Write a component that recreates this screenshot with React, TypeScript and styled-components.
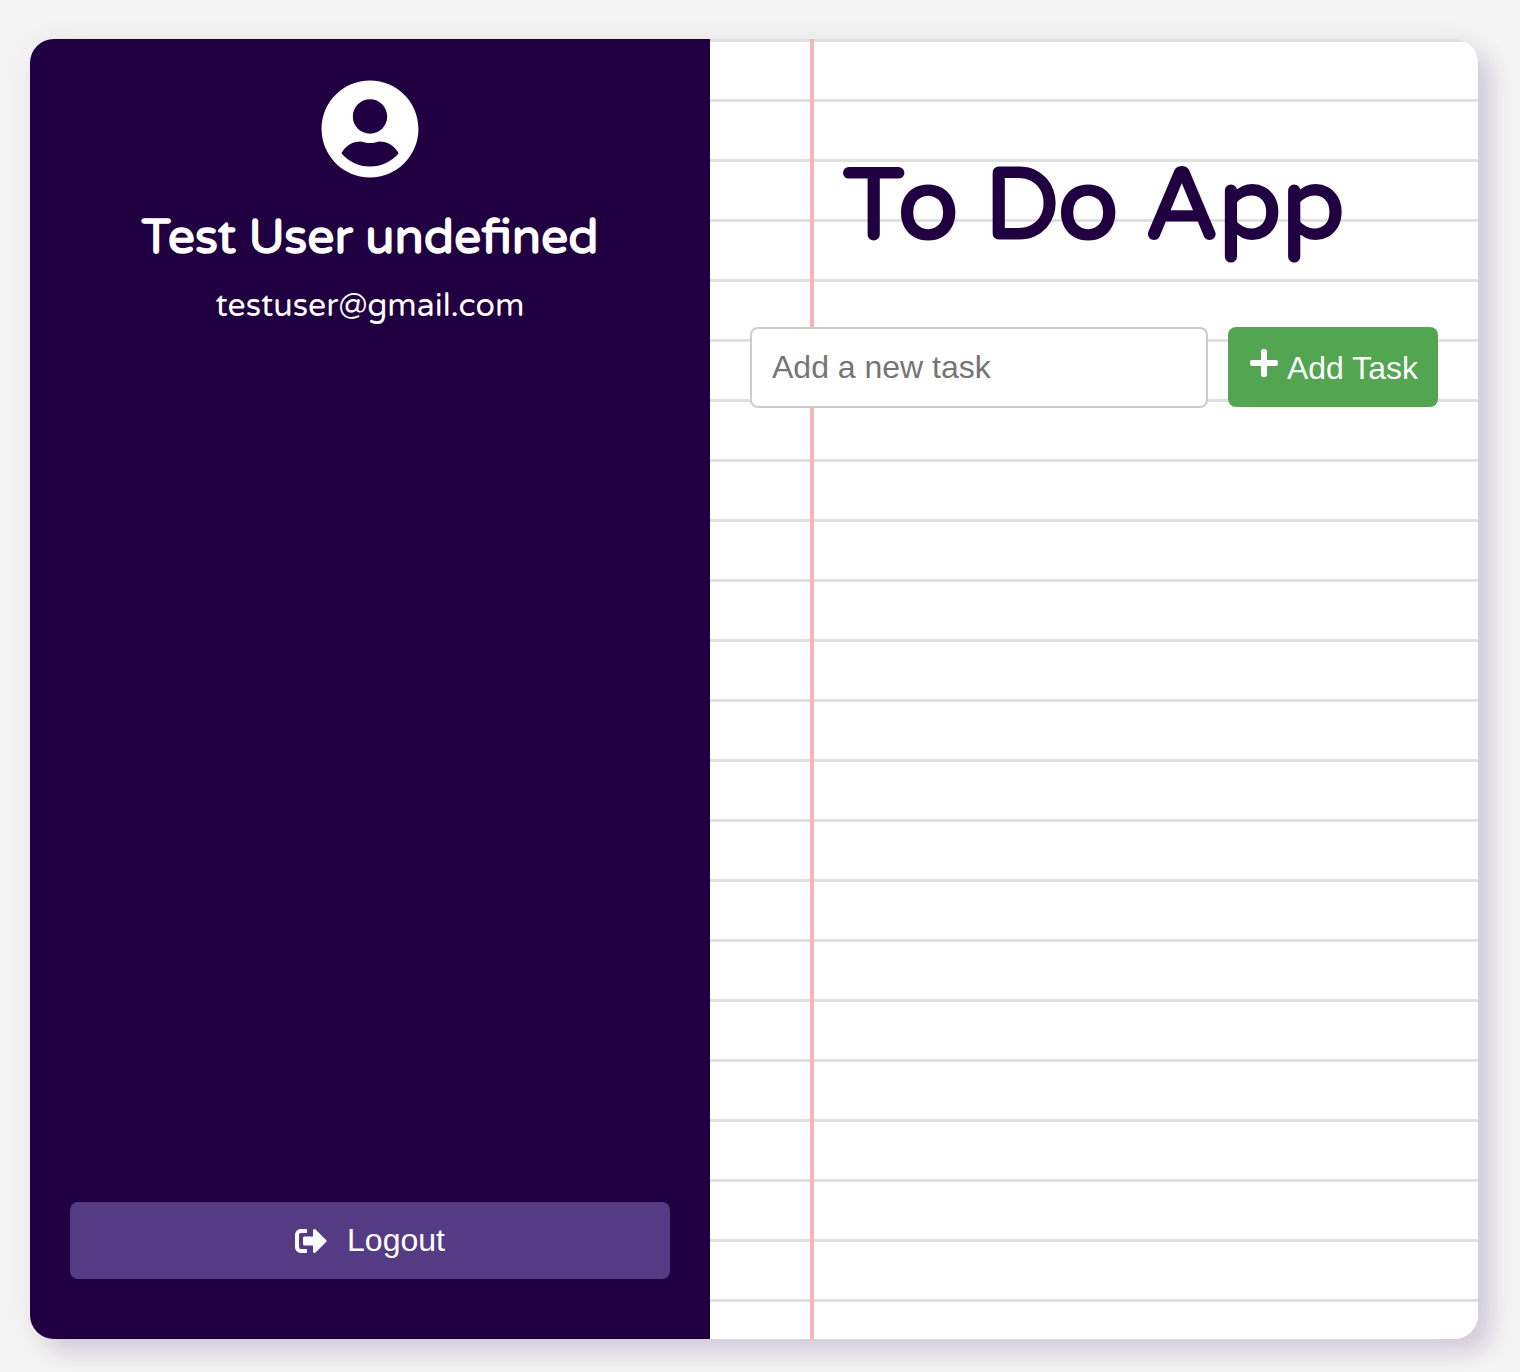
import React, { useState } from 'react';
import styled, { createGlobalStyle } from 'styled-components';
import { FaPlus, FaSignOutAlt, FaUserCircle } from 'react-icons/fa';

const GlobalStyle = createGlobalStyle`
  *, *::before, *::after { box-sizing: border-box; }
  body {
    margin: 0;
    background: #f4f4f4;
    font-family: 'Varela Round', Lato, sans-serif;
  }
  button, input {
    font-family: Arial, 'Liberation Sans', sans-serif;
    font-size: 32px;
    line-height: 37px;
  }
`;

const Page = styled.div`
  display: flex;
  min-height: 100vh;
  padding: 39px 42px 33px 30px;
`;

const Card = styled.div`
  display: flex;
  flex: 1;
  min-width: 0;
  overflow: hidden;
  border-radius: 24px;
  box-shadow: 14px 14px 22px rgba(52, 16, 104, 0.15), 0 0 40px rgba(0, 0, 0, 0.05);
`;

const Sidebar = styled.aside`
  display: flex;
  flex: 0 0 680px;
  flex-direction: column;
  justify-content: space-between;
  padding: 40px 40px 60px;
  background: #200040;
  color: #fff;
`;

const Profile = styled.div`
  display: flex;
  flex-direction: column;
  align-items: center;
  text-align: center;
`;

const UserName = styled.h2`
  margin: 29px 0 0;
  font-size: 48px;
  line-height: 60px;
  font-weight: 700;
`;

const Email = styled.p`
  margin: 18px 0 0;
  font-size: 32px;
  line-height: 40px;
`;

const LogoutButton = styled.button`
  display: flex;
  align-items: center;
  justify-content: center;
  gap: 20px;
  width: 100%;
  padding: 20px;
  border: 0;
  border-radius: 8px;
  background: #543b84;
  color: #fff;
  cursor: pointer;
`;

const Notebook = styled.main`
  flex: 1;
  min-width: 0;
  padding: 108px 40px 40px;
  background:
    linear-gradient(#f5b5b9, #f5b5b9) 100px 0 / 4px 100% no-repeat,
    repeating-linear-gradient(#e0e0e0 0 3px, #fff 3px 60px);
`;

const Title = styled.h1`
  margin: 0 0 60px;
  color: #200040;
  font-size: 100px;
  line-height: 120px;
  font-weight: 700;
  text-align: center;
`;

const TaskForm = styled.form`
  display: flex;
  align-items: flex-start;
  gap: 20px;
`;

const TaskInput = styled.input`
  flex: 1;
  min-width: 0;
  padding: 20px;
  border: 2px solid #ccc;
  border-radius: 8px;
  background: #fff;
  color: #200040;

  &::placeholder { color: #757575; }
`;

const AddButton = styled.button`
  flex: none;
  height: 80px;
  padding: 20px;
  border: 0;
  border-radius: 8px;
  background: #54a552;
  color: #fff;
  cursor: pointer;
`;

export default function App() {
  const [task, setTask] = useState('');
  return (
    <>
      <GlobalStyle />
      <Page>
        <Card>
          <Sidebar>
            <Profile>
              <FaUserCircle size={100} aria-hidden />
              <UserName>Test User undefined</UserName>
              <Email>testuser@gmail.com</Email>
            </Profile>
            <LogoutButton type="button">
              <FaSignOutAlt aria-hidden />
              Logout
            </LogoutButton>
          </Sidebar>
          <Notebook>
            <Title>To Do App</Title>
            <TaskForm onSubmit={(event) => event.preventDefault()}>
              <TaskInput
                type="text"
                aria-label="Add a new task"
                placeholder="Add a new task"
                value={task}
                onChange={(event) => setTask(event.target.value)}
              />
              <AddButton type="submit">
                <FaPlus aria-hidden /> Add Task
              </AddButton>
            </TaskForm>
          </Notebook>
        </Card>
      </Page>
    </>
  );
}
